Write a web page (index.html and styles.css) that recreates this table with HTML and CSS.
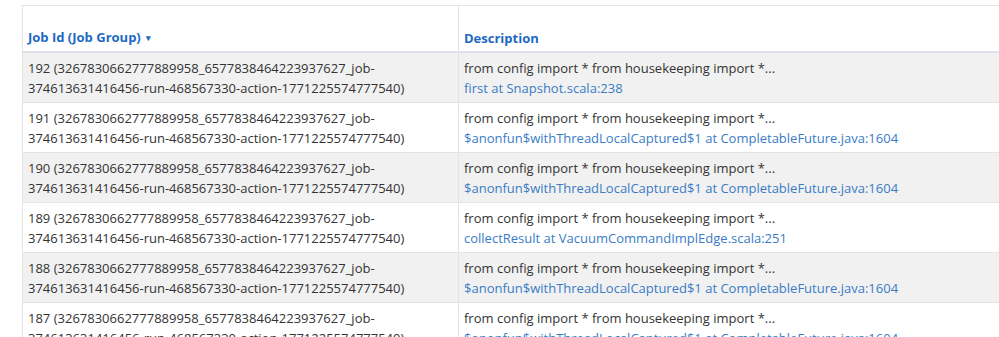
FILE: index.html
```html
<!DOCTYPE html>
<html>
<head>
<meta charset="utf-8">
<link rel="stylesheet" href="styles.css">
</head>
<body>
<div class="page">
<table class="jobs">
  <thead>
    <tr>
      <th class="col-id"><a class="sort">Job Id (Job Group) <span class="arrow">&#9662;</span></a></th>
      <th class="col-desc"><a class="sort">Description</a></th>
    </tr>
  </thead>
  <tbody>
    <tr>
      <td>192 (3267830662777889958_6577838464223937627_job-<br>374613631416456-run-468567330-action-1771225574777540)</td>
      <td><div class="desc">from config import * from housekeeping import *...</div><a class="link">first at Snapshot.scala:238</a></td>
    </tr>
    <tr>
      <td>191 (3267830662777889958_6577838464223937627_job-<br>374613631416456-run-468567330-action-1771225574777540)</td>
      <td><div class="desc">from config import * from housekeeping import *...</div><a class="link">$anonfun$withThreadLocalCaptured$1 at CompletableFuture.java:1604</a></td>
    </tr>
    <tr>
      <td>190 (3267830662777889958_6577838464223937627_job-<br>374613631416456-run-468567330-action-1771225574777540)</td>
      <td><div class="desc">from config import * from housekeeping import *...</div><a class="link">$anonfun$withThreadLocalCaptured$1 at CompletableFuture.java:1604</a></td>
    </tr>
    <tr>
      <td>189 (3267830662777889958_6577838464223937627_job-<br>374613631416456-run-468567330-action-1771225574777540)</td>
      <td><div class="desc">from config import * from housekeeping import *...</div><a class="link">collectResult at VacuumCommandImplEdge.scala:251</a></td>
    </tr>
    <tr>
      <td>188 (3267830662777889958_6577838464223937627_job-<br>374613631416456-run-468567330-action-1771225574777540)</td>
      <td><div class="desc">from config import * from housekeeping import *...</div><a class="link">$anonfun$withThreadLocalCaptured$1 at CompletableFuture.java:1604</a></td>
    </tr>
    <tr>
      <td>187 (3267830662777889958_6577838464223937627_job-<br>374613631416456-run-468567330-action-1771225574777540)</td>
      <td><div class="desc">from config import * from housekeeping import *...</div><a class="link">$anonfun$withThreadLocalCaptured$1 at CompletableFuture.java:1604</a></td>
    </tr>
  </tbody>
</table>
</div>
</body>
</html>
```
FILE: styles.css
```css
html, body {
  margin: 0;
  padding: 0;
  background: #ffffff;
  overflow: hidden;
}
body {
  font-family: "Open Sans", "Noto Sans", sans-serif;
  font-size: 13px;
  color: #333333;
}
.page {
  padding: 5px 0 0 22px;
  width: 1200px;
}
.jobs {
  border-collapse: collapse;
  width: 1150px;
  border: 1px solid #e4e4e4;
}
.jobs th {
  height: 42px;
  text-align: left;
  vertical-align: bottom;
  padding: 0 5px 3px 5px;
  border-bottom: 2px solid #dde2e8;
  font-weight: 700;
  line-height: 20px;
}
.jobs th + th, .jobs td + td {
  border-left: 1px solid #e4e4e4;
}
.col-id {
  width: 425px;
}
.sort {
  color: #1d6ac3;
  text-decoration: none;
}
.arrow {
  font-size: 9px;
  margin-left: 2px;
  vertical-align: 1px;
}
.jobs td {
  padding: 5px 5px 4px 5px;
  line-height: 20px;
  vertical-align: top;
  border-top: 1px solid #e4e4e4;
  white-space: nowrap;
}
.jobs tbody tr:first-child td {
  border-top: none;
}
.jobs tbody tr:nth-child(odd) td {
  background: #f1f1f1;
}
.link {
  color: #3a7cc6;
  text-decoration: none;
}
```
